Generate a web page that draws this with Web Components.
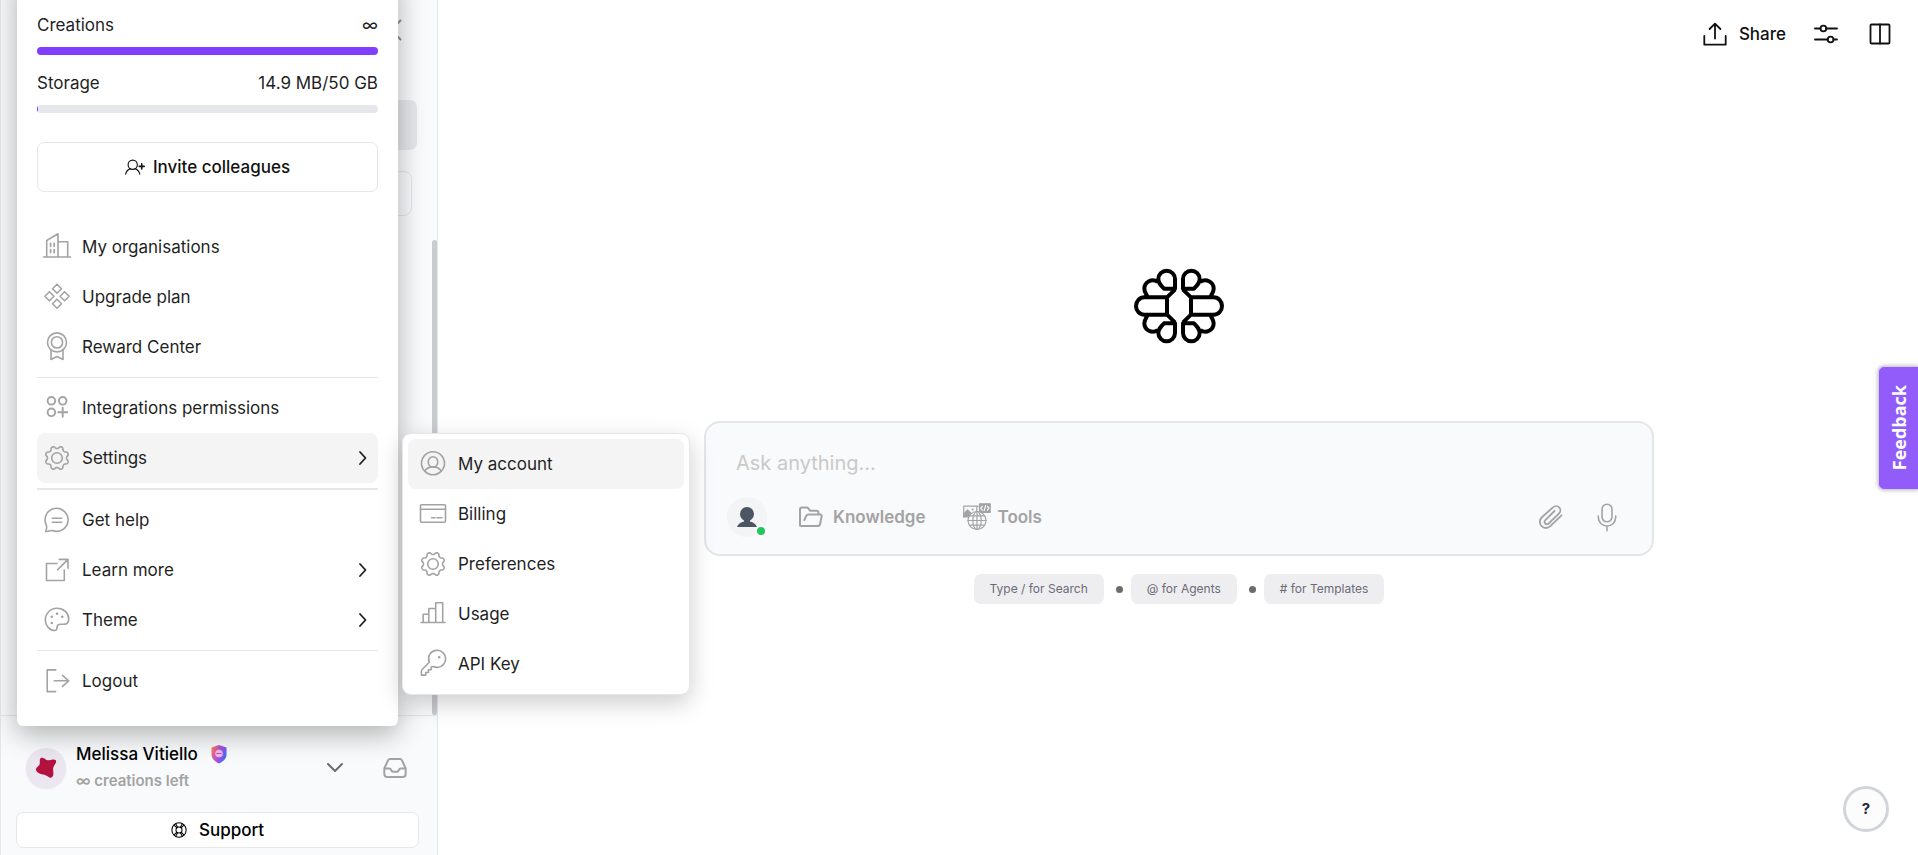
<!DOCTYPE html>
<html lang="en">
<head>
<meta charset="utf-8">
<meta name="viewport" content="width=device-width, initial-scale=1">
<title>Workspace</title>
<style>
	:root {
		--line: #e5e7eb;
		--muted: #a3a3a3;
		--ink: #1f1f1f;
		--panel: #f9fafb;
		--brand: #7f3ffc;
	}
	body {
		margin: 0;
		font: 17px/24px Inter, 'Liberation Sans', sans-serif;
		color: var(--ink);
		background: #fff;
	}
</style>
</head>
<body>
<app-shell></app-shell>

<script>
	const gear = () => {
		const points = []
		for (let i = 0; i < 96; i++) {
			const a = (i / 96) * Math.PI * 2
			const r = 10.7 + 1.2 * Math.tanh(-1.8 * Math.cos(8 * a))
			points.push(`${(14 + r * Math.cos(a)).toFixed(2)} ${(14 + r * Math.sin(a)).toFixed(2)}`)
		}
		return `<path d="M${points.join('L')}Z"/><circle cx="14" cy="14" r="5.3"/>`
	}

	// all drawn on a 28 x 28 grid
	const icons = {
		org: '<path d="M.5 24h27M3.7 24V7.5L15 .8V24M15 8.7h9.7V24"/><path d="M7.6 10.3v3M11.2 10.3v3M7.6 16.6v3M11.2 16.6v3" stroke-width="1.8"/>',
		plan: '<path d="M14 1.2l4.5 4.5-4.5 4.5-4.5-4.5zM14 16.2l4.5 4.5-4.5 4.5-4.5-4.5zM6.4 8.7l4.5 4.5-4.5 4.5-4.5-4.5zM21.6 8.7l4.5 4.5-4.5 4.5-4.5-4.5z"/>',
		reward: '<circle cx="14" cy="9.4" r="9.5"/><circle cx="14" cy="9.4" r="5.6"/><path d="M8 17.5v9l6-3 6 3v-9"/>',
		apps: '<g stroke-width="1.9"><circle cx="8.4" cy="6.8" r="3.8"/><circle cx="19.7" cy="6.8" r="3.8"/><circle cx="8.4" cy="18.3" r="3.8"/><path d="M19.7 13.8v9M15.2 18.3h9"/></g>',
		gear: gear(),
		help: '<path d="M2.6 25.5c1.4-3 1.3-4.5.7-6.5A11.5 11.5 0 1 1 9.5 24.6c-2.2-.5-4 .9-6.9.9z"/><path d="M9.3 12.2h9.4M9.3 16.2h9.4"/>',
		external: '<path d="M14 7.5H3.5v17h17.8V14M14.7 13.6L25 3.4M16.3 3.4H25V12.3"/>',
		palette: '<path d="M14 2.3c6.7 0 11.7 4.7 11.7 10.7 0 3.5-1.7 5.2-4.4 5.2h-3.6c-2.8 0-3.7 1.3-3.7 3.3 0 2.2-.8 3-2.3 3C6.6 24.5 2.3 19.6 2.3 14 2.3 7.5 7.3 2.3 14 2.3z"/><g fill="currentColor" stroke="none"><circle cx="14" cy="7.7" r="1.3"/><circle cx="8.8" cy="10.7" r="1.3"/><circle cx="19.2" cy="10.7" r="1.3"/><circle cx="8.8" cy="17" r="1.3"/></g>',
		logout: '<path d="M12.7 2.9H4.2v21.7h8.5M11.3 13.8h14.4M19.5 8.3l6.2 5.5-6.2 5.5"/>',
		account: '<circle cx="14" cy="13.2" r="11.5"/><ellipse cx="14" cy="12" rx="4.8" ry="5.2"/><path d="M5.8 21.2c1.5-3 4.4-4.3 8.2-4.3s6.7 1.3 8.2 4.3"/>',
		card: '<rect x="1.5" y="4.7" width="25" height="17.6" rx="1"/><path d="M1.5 9.2h25M12.7 17.7h3.3M18 17.7h5"/>',
		chart: '<path d="M2 22.5h24M4.2 22.5V14.2h5.6M9.8 22.5V8.5h6.9M16.7 22.5V2.7h7v19.8"/>',
		key: '<path d="M10.3 12.3L3.4 19.2c-.7.7-1 1.3-1 2.2v3.7h4.3v-2.6h2.7v-2.8h2.8v-2.6l2.2-.6A8.5 8.5 0 1 0 10.3 12.3z"/><circle cx="20.2" cy="7.2" r="1.2" fill="currentColor" stroke="none"/>',
		right: '<path d="M11 8l5.5 6-5.5 6"/>',
		left: '<path d="M16.5 4.5L7 14l9.5 9.5"/>',
		down: '<path d="M7 10l7 7 7-7"/>',
		invite: '<circle cx="12" cy="10.5" r="7.2"/><path d="M1 25c1-4.500 3.500-7 7.500-8.500M23 25c-1-4.500-3.500-7-7.500-8.500"/><path d="M26 9v8M22 13h8" stroke-width="2.400"/>',
		buoy: '<circle cx="14" cy="14" r="12.5"/><circle cx="14" cy="14" r="5.3"/><path d="M5.500 5.500l4.700 4.700M22.500 5.500l-4.700 4.700M5.500 22.500l4.700-4.700M22.500 22.500l-4.700-4.700M8.500 3.500l3 5.500M19.500 3.500l-3 5.500M8.500 24.500l3-5.500M19.500 24.500l-3-5.500"/>',
		inbox: '<path d="M3.3 14.5L7 6.3Q7.6 5 9 5h10q1.4 0 2 1.3l3.7 8.2V20q0 3-3 3H6.300q-3 0-3-3zM3.300 14.500h5.200c1 0 1.200.6 1.600 1.500.5 1.200 1 1.700 2 1.700h3.800c1 0 1.500-.5 2-1.700.4-.9.6-1.500 1.600-1.500h5.200"/>',
		share: '<path d="M3.3 16v8.7h21.4V16M14 18.5V3.6M8.6 9L14 3.6 19.4 9"/>',
		sliders: '<path d="M3 8.5h5.5M14.3 8.5H25M3 19.5h12.700M21.500 19.500H25"/><circle cx="11.400" cy="8.500" r="2.900"/><circle cx="18.600" cy="19.500" r="2.900"/>',
		panel: '<rect x="4.5" y="4.5" width="19" height="19" rx="1"/><path d="M14 4.5v19"/>',
		folder: '<path d="M4 22.500V6.500q0-2 2-2h4.500q1.200 0 1.900 1l1.600 2.200h6.500q2 0 2 2v1.800M8.300 17l1.700-3.700q.8-1.800 2.800-1.800h11q2.300 0 1.800 2.200l-1.500 7.300q-.4 2-2.400 2H5.500q-1.500 0-1.500-1.500"/>',
		clip: '<path d="M24.5 12.3L13.3 23.2a6.1 6.1 0 0 1-8.7-8.7L16 4.3a4.3 4.3 0 0 1 6.1 6.1L11.7 20.5a2.400 2.400 0 0 1-3.400-3.400L17.500 8"/>',
		mic: '<rect x="9" y="1.2" width="10" height="17.6" rx="5"/><path d="M5.3 13v1.3a8.7 8.7 0 0 0 17.4 0V13M14 23v4.8"/>',
		tools: '<path d="M15 3.200H.8V14M13.800 3.200v5"/><path d="M.8 14v-3l3.700-4 3.300 3-2.500 4z" fill="currentColor"/><circle cx="9.600" cy="6.500" r=".5"/><rect x="16.500" y=".8" width="10.700" height="8.500" fill="currentColor"/><path d="M19.300 3.300l-1.600 1.900 1.600 1.900M24.400 3.300L26 5.200l-1.600 1.900M22.600 2.700l-1.500 5" stroke="#f9fafb"/><circle cx="14" cy="17.500" r="9" fill="#f9fafb"/><ellipse cx="14" cy="17.500" rx="4.200" ry="9"/><path d="M5 17.500h18M6.500 12.800h15M6.500 22.200h15M14 8.500v18"/>',
	}

	const component = (name, { styles = '', template }) => {
		customElements.define(
			name,
			class extends HTMLElement {
				connectedCallback() {
					if (this.shadowRoot) return
					this.attachShadow({ mode: 'open' })
					this.shadowRoot.innerHTML = `<style>* { box-sizing: border-box }
						button { font: inherit; color: inherit; cursor: pointer; border: 0; background: none; padding: 0; margin: 0 }
						${styles}</style>${template(this)}`
				}
			}
		)
	}

	component('ui-icon', {
		styles: `
			:host { display: inline-flex; flex: none; width: var(--size, 28px); height: var(--size, 28px) }
			svg { width: 100%; height: 100%; overflow: visible; fill: none; stroke: currentColor; stroke-width: var(--stroke, 1.6); stroke-linejoin: round; stroke-linecap: round }
		`,
		template: (el) => `<svg viewBox="0 0 28 28" aria-hidden="true">${icons[el.getAttribute('name')]}</svg>`,
	})

	// one quarter of the mark, mirrored into the other three
	component('brand-logo', {
		styles: `
			:host { display: block; width: 90px; height: 76px }
			svg { display: block; width: 100%; height: 100% }
		`,
		template: () => {
			const petal = '<path d="M-12-52V-81A25 25 0 0 0-62-81C-62-70-57-64-45-52ZM-12-49L-36-26M-64-72A25 25 0 0 0-104-52C-104-42-99-37-94-27M-36 0V-26H-104A25 26 0 0 0-129 0"/>'
			const quarters = ['1,1', '-1,1', '1,-1', '-1,-1'].map((s) => `<g transform="scale(${s})">${petal}</g>`)
			return `<svg viewBox="-135 -114 270 228" fill="none" stroke="#000" stroke-width="12" stroke-linejoin="round" aria-label="Logo">${quarters.join('')}</svg>`
		},
	})

	component('usage-meter', {
		styles: `
			:host { display: flex; flex-direction: column; gap: 10px }
			.row { display: flex; justify-content: space-between }
			.track { height: 8px; border-radius: 4px; background: var(--line); overflow: hidden }
			.fill { height: 100%; min-width: 1px; background: var(--brand) }
		`,
		template: (el) => `
			<div class="row"><span>${el.getAttribute('label')}</span><span>${el.getAttribute('value')}</span></div>
			<div class="track"><div class="fill" style="width: ${el.getAttribute('percent')}%"></div></div>
		`,
	})

	component('menu-item', {
		styles: `
			:host { display: block; position: relative }
			button { display: flex; align-items: center; gap: 11px; width: 100%; height: 50px; padding: 0 var(--item-pad, 6px); border-radius: 8px; text-align: left }
			button:hover, :host([active]) button { background: #f4f4f4 }
			ui-icon { color: var(--muted) }
			.label { flex: 1 }
			.arrow { color: var(--ink); --stroke: 1.8; margin-right: -5px }
		`,
		template: (el) => `
			<button type="button" role="menuitem">
				<ui-icon name="${el.getAttribute('icon')}"></ui-icon>
				<span class="label">${el.getAttribute('label')}</span>
				${el.hasAttribute('more') ? '<ui-icon class="arrow" name="right"></ui-icon>' : ''}
			</button>
			<slot></slot>
		`,
	})

	component('sub-menu', {
		styles: `
			:host { display: block; position: absolute; top: 0; left: calc(100% + 24px); width: 288px; padding: 5px; border: 1px solid var(--line); border-radius: 9px; background: #fff; box-shadow: 0 8px 24px rgba(0, 0, 0, .2); --item-pad: 11px; box-sizing: border-box }
		`,
		template: () => `<slot></slot>`,
	})

	component('user-menu', {
		styles: `
			:host { display: block; padding: 40px 20px 20px; border-radius: 6px; background: #fff; box-shadow: 0 8px 28px rgba(0, 0, 0, .3) }
			hr { height: 1px; border: 0; margin: 5px 0; background: var(--line) }
			.thick { height: 2px }
			.meters { display: flex; flex-direction: column; gap: 16px }
			.invite { display: flex; align-items: center; justify-content: center; gap: 10px; width: 100%; height: 50px; margin: 29px 0 30px; border: 1px solid var(--line); border-radius: 7px; font-weight: 500; color: #111 }
			.invite ui-icon { --size: 18px; --stroke: 1.8 }
		`,
		template: () => `
			<div class="meters">
				<usage-meter label="Creations" value="∞" percent="100"></usage-meter>
				<usage-meter label="Storage" value="14.9 MB/50 GB" percent="0"></usage-meter>
			</div>
			<button class="invite" type="button"><ui-icon name="invite"></ui-icon>Invite colleagues</button>
			<nav role="menu">
				<menu-item icon="org" label="My organisations"></menu-item>
				<menu-item icon="plan" label="Upgrade plan"></menu-item>
				<menu-item icon="reward" label="Reward Center"></menu-item>
				<hr>
				<menu-item icon="apps" label="Integrations permissions"></menu-item>
				<menu-item icon="gear" label="Settings" more active>
					<sub-menu>
						<menu-item icon="account" label="My account" active></menu-item>
						<menu-item icon="card" label="Billing"></menu-item>
						<menu-item icon="gear" label="Preferences"></menu-item>
						<menu-item icon="chart" label="Usage"></menu-item>
						<menu-item icon="key" label="API Key"></menu-item>
					</sub-menu>
				</menu-item>
				<hr class="thick">
				<menu-item icon="help" label="Get help"></menu-item>
				<menu-item icon="external" label="Learn more" more></menu-item>
				<menu-item icon="palette" label="Theme" more></menu-item>
				<hr>
				<menu-item icon="logout" label="Logout"></menu-item>
			</nav>
		`,
	})

	component('user-card', {
		styles: `
			:host { display: flex; align-items: center; padding: 0 10px }
			.avatar { display: block; width: 40px; height: 40px; margin-right: 10px; border-radius: 50%; background: #ece6f0; box-shadow: 0 1px 2px rgba(0, 0, 0, .08) }
			.info { display: grid; gap: 3px; flex: 1 }
			.name { display: flex; align-items: center; gap: 12px; font-weight: 500; color: #000 }
			.left { font-size: 15px; font-weight: 600; color: var(--muted) }
			.badge { width: 18px; height: 20px }
			.actions { display: flex; gap: 32px }
			.toggle { color: #6b6b6b; --stroke: 2 }
			.inbox { color: var(--muted); --stroke: 2 }
			button { display: flex }
		`,
		template: () => `
			<svg class="avatar" viewBox="0 0 40 40" aria-hidden="true"><path fill="#b3123f" d="M16 9.7C18.500 9.300 19.500 12.300 22 12.300C25 12.300 28 10.500 29.700 12.300C31.500 14.500 27.300 17.500 27.100 20.500C27 23.500 28.500 28 25.500 29.500C23 30.500 21 27.300 18.500 26.800C15 26.200 10.300 25 10 21.500C10 19 13.700 18 13.800 15.500C14 13 13 10 16 9.700Z"/></svg>
			<div class="info">
				<span class="name">Melissa Vitiello
					<svg class="badge" viewBox="0 0 18 20" aria-label="Member badge">
						<defs><linearGradient id="shield" x1="0" x2="1" y1=".2" y2=".6"><stop offset="0" stop-color="#ff7a59"/><stop offset=".5" stop-color="#b44fd8"/><stop offset="1" stop-color="#3f6bff"/></linearGradient></defs>
						<path fill="url(#shield)" d="M9 1l7.500 2.500v7c0 4-3 7-7.500 9-4.500-2-7.500-5-7.500-9v-7z"/>
						<circle cx="9" cy="9.500" r="3.800" fill="#f0b6e6"/><path d="M6.500 9.500h5" stroke="#b44fd8"/>
					</svg>
				</span>
				<span class="left">∞ creations left</span>
			</div>
			<div class="actions">
				<button class="toggle" type="button" aria-label="Account menu"><ui-icon name="down"></ui-icon></button>
				<button class="inbox" type="button" aria-label="Inbox"><ui-icon name="inbox"></ui-icon></button>
			</div>
		`,
	})

	component('app-sidebar', {
		styles: `
			:host { display: flex; flex-direction: column; position: relative; z-index: 1; width: 438px; flex: none; border: solid var(--line); border-width: 0 1px; background: var(--panel); box-sizing: border-box }
			.top { display: flex; justify-content: flex-end; height: 60px; align-items: center; padding: 0 25px 0 20px; color: #8a8a8a; --stroke: 1.8 }
			.top button { display: flex }
			.current { height: 50px; margin: 40px 20px 21px; border-radius: 7px; background: var(--line) }
			.search { height: 45px; margin: 0 25px 24px 20px; border: 1px solid var(--line); border-radius: 8px; background: none }
			.list { display: flex; flex: 1; justify-content: flex-end; min-height: 0 }
			.thumb { width: 5px; border-radius: 3px; background: #c9cbcf }
			footer { display: grid; gap: 19px; padding: 26px 18px 7px 15px; border-top: 1px solid var(--line) }
			.support { display: flex; align-items: center; justify-content: center; gap: 12px; height: 36px; border: 1px solid var(--line); border-radius: 7px; background: #fff; font-weight: 500; color: #000 }
			.support ui-icon { --size: 16px; --stroke: 1.8 }
			user-menu { position: absolute; left: 16px; bottom: 129px; width: 381px; box-sizing: border-box }
		`,
		template: () => `
			<div class="top"><button type="button" aria-label="Collapse sidebar"><ui-icon name="left"></ui-icon></button></div>
			<div class="current"></div>
			<input class="search" type="search" aria-label="Search chats">
			<div class="list"><div class="thumb"></div></div>
			<footer>
				<user-card></user-card>
				<button class="support" type="button"><ui-icon name="buoy"></ui-icon>Support</button>
			</footer>
			<user-menu></user-menu>
		`,
	})

	component('prompt-box', {
		styles: `
			:host { display: flex; flex-direction: column; gap: 19px; width: 100%; max-width: 950px; padding: 25px 31px 17px 21px; border: 2px solid #e4e5ea; border-radius: 16px; background: var(--panel); box-sizing: border-box }
			input { width: 100%; height: 30px; padding: 0 9px; border: 0; outline: 0; background: none; font: 20px/30px Inter, sans-serif; color: var(--ink) }
			input::placeholder { color: #c9c9c9; opacity: 1 }
			.tools { display: flex; align-items: center; color: var(--muted); font-weight: 600 }
			.tools button { display: flex; align-items: center }
			.agent { position: relative; width: 40px; height: 40px; border-radius: 50%; background: #f3f4f6; color: #4b5563 }
			.tools .agent { justify-content: center }
			.agent svg { width: 20px; height: 20px }
			.status { position: absolute; right: 0; bottom: 0; width: 12px; height: 12px; border: 2px solid #fff; border-radius: 50%; background: #22c55e }
			.knowledge { gap: 9px; margin-left: 29px; --stroke: 2 }
			.tool { gap: 7px; margin-left: 37px; --stroke: 1.2 }
			.clip { margin-left: auto; --stroke: 1.8 }
			.mic { margin-left: 28px; --stroke: 1.6 }
		`,
		template: () => `
			<input type="text" placeholder="Ask anything..." aria-label="Ask anything">
			<div class="tools">
				<button class="agent" type="button" aria-label="Agent">
					<svg viewBox="0 0 20 20" fill="currentColor" aria-hidden="true"><path d="M10 0a7 7 0 0 1 7 7c0 3-1.500 5-4 6.500v1c3.500.8 6 2.500 7 5.500H0c1-3 3.500-4.700 7-5.500v-1C4.500 12 3 10 3 7a7 7 0 0 1 7-7z"/></svg>
					<span class="status"></span>
				</button>
				<button class="knowledge" type="button"><ui-icon name="folder"></ui-icon>Knowledge</button>
				<button class="tool" type="button"><ui-icon name="tools"></ui-icon>Tools</button>
				<button class="clip" type="button" aria-label="Attach file"><ui-icon name="clip"></ui-icon></button>
				<button class="mic" type="button" aria-label="Dictate"><ui-icon name="mic"></ui-icon></button>
			</div>
		`,
	})

	component('hint-list', {
		styles: `
			:host { display: flex; align-items: center; margin-top: 18px; font-size: 12px; line-height: 20px }
			span { padding: 5px 16px; border-radius: 7px; background: #eeeef0; color: #6b6b76 }
			i { width: 7px; height: 7px; margin: 2px 8px 0 12px; border-radius: 50%; background: #6b6b6b }
		`,
		template: (el) => el.getAttribute('hints').split('|').map((hint) => `<span>${hint}</span>`).join('<i></i>'),
	})

	component('app-toolbar', {
		styles: `
			:host { display: flex; justify-content: flex-end; align-items: center; gap: 26px; height: 68px; padding: 0 24px; color: #111; --stroke: 1.8; box-sizing: border-box }
			button { display: flex; align-items: center; gap: 10px; font-weight: 500 }
		`,
		template: () => `
			<button type="button"><ui-icon name="share"></ui-icon>Share</button>
			<button type="button" aria-label="Options"><ui-icon name="sliders"></ui-icon></button>
			<button type="button" aria-label="Toggle panel"><ui-icon name="panel"></ui-icon></button>
		`,
	})

	component('app-shell', {
		styles: `
			:host { display: flex; min-height: 100vh; overflow: hidden; position: relative }
			main { display: flex; flex-direction: column; flex: 1; min-width: 0 }
			.center { display: flex; flex: 1; flex-direction: column; align-items: center; justify-content: center; padding: 0 24px 52px 26px }
			brand-logo { margin-bottom: 77px }
			.feedback { position: absolute; right: 0; top: 366px; display: flex; align-items: center; justify-content: center; width: 40px; height: 124px; border: 1px solid #d9cdf5; border-right: 0; border-radius: 6px 0 0 6px; background: #915cf9; box-shadow: 0 0 4px rgba(0, 0, 0, .3); color: #fff; font: bold 18px/24px 'Open Sans', sans-serif }
			.feedback span { writing-mode: vertical-rl; transform: rotate(180deg) }
			.help { position: absolute; right: 29px; bottom: 23px; width: 46px; height: 46px; border: 3px solid #d1d5db; border-radius: 50%; background: #fcfcfd; color: #1f2937; font-size: 15px; font-weight: 700 }
		`,
		template: () => `
			<app-sidebar></app-sidebar>
			<main>
				<app-toolbar></app-toolbar>
				<div class="center">
					<brand-logo></brand-logo>
					<prompt-box></prompt-box>
					<hint-list hints="Type / for Search|@ for Agents|# for Templates"></hint-list>
				</div>
			</main>
			<button class="feedback" type="button"><span>Feedback</span></button>
			<button class="help" type="button" aria-label="Help">?</button>
		`,
	})
</script>
</body>
</html>
